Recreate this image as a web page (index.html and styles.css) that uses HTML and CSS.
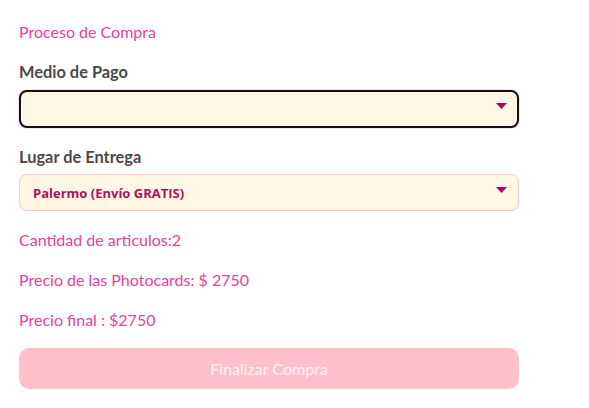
FILE: index.html
```html
<!DOCTYPE html>
<html lang="es">
<head>
<meta charset="utf-8">
<title>Proceso de Compra</title>
<link rel="stylesheet" href="styles.css">
</head>
<body>
<main class="page">
  <p class="title">Proceso de Compra</p>
  <div class="field field-pay">
    <label class="label">Medio de Pago</label>
    <div class="select select-focus">
      <span class="select-text"></span>
      <svg class="arrow" width="11" height="6" viewBox="0 0 11 6"><path d="M0 0H11L5.5 6Z" fill="#b0005a"/></svg>
    </div>
  </div>
  <div class="field field-place">
    <label class="label">Lugar de Entrega</label>
    <div class="select">
      <span class="select-text">Palermo (Envío GRATIS)</span>
      <svg class="arrow" width="11" height="6" viewBox="0 0 11 6"><path d="M0 0H11L5.5 6Z" fill="#b0005a"/></svg>
    </div>
  </div>
  <p class="info">Cantidad de articulos:2</p>
  <p class="info">Precio de las Photocards: $ 2750</p>
  <p class="info">Precio final : $2750</p>
  <button class="btn" type="button">Finalizar Compra</button>
</main>
</body>
</html>
```
FILE: styles.css
```css
* { box-sizing: border-box; }
body {
  margin: 0;
  background: #ffffff;
  font-family: "Lato", "Open Sans", sans-serif;
  font-size: 16px;
}
.page {
  width: 519px;
  padding: 20px 0 0 19px;
  display: flex;
  flex-direction: column;
}
.title {
  margin: 0 0 16px;
  line-height: 24px;
  color: #e8409a;
}
.field {
  display: flex;
  flex-direction: column;
  margin-bottom: 17px;
}
.field-pay { gap: 6px; }
.field-place { gap: 5px; }
.label {
  line-height: 24px;
  font-weight: 700;
  font-size: 16.4px;
  color: #4a4a4a;
}
.select {
  height: 37px;
  border: 1px solid #ffc0cb;
  border-radius: 8px;
  background: #fff6e4;
  display: flex;
  align-items: center;
  justify-content: space-between;
  padding: 0 11px 0 13px;
}
.select-focus {
  height: 38px;
  border: 2px solid #111111;
  box-shadow: 0 0 0 1px #ffe0ea;
  padding: 0 10px 0 12px;
}
.select-text {
  font-family: "Open Sans", "Lato", sans-serif;
  font-size: 13px;
  font-weight: 700;
  color: #b0105a;
}
.arrow { display: block; margin-bottom: 6px; }
.info {
  margin: 0 0 16px;
  line-height: 24px;
  color: #e8409a;
}
.btn {
  height: 41px;
  border: none;
  border-radius: 10px;
  background: #ffc0cb;
  color: #fff4f6;
  font-family: inherit;
  font-size: 16px;
  padding: 0;
}
```
